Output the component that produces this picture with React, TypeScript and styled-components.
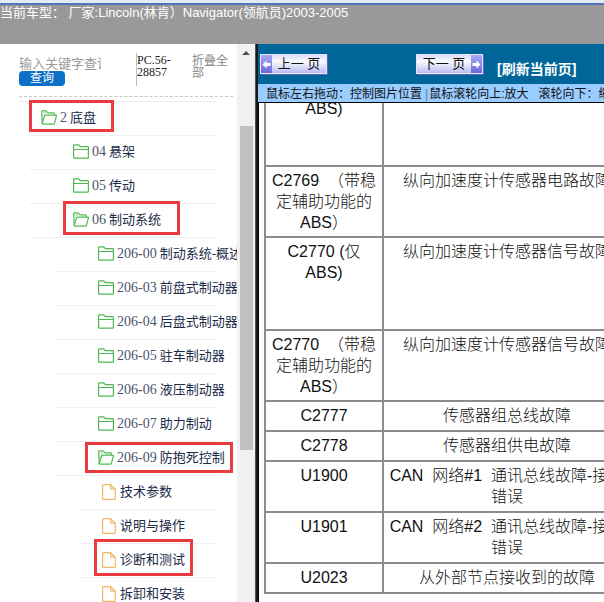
import React from "react";
import styled, { createGlobalStyle, css } from "styled-components";

const GlobalStyle = createGlobalStyle`
  *, *::before, *::after { box-sizing: border-box; }
  body {
    margin: 0;
    background: #fff;
    font-family: "Liberation Sans", "Noto Sans CJK SC", sans-serif;
    font-size: 13px;
  }
  button, input { font: inherit; margin: 0; padding: 0; border: 0; background: none; }
  button { cursor: pointer; }
  a { text-decoration: none; }
`;

const serif = `"Liberation Serif", "Noto Sans CJK SC", serif`;

const Page = styled.div`
  display: grid;
  grid-template-rows: 44px minmax(0, 1fr);
  height: 100vh;
  overflow: hidden;
`;

const Header = styled.header`
  padding: 3px 0 0;
  border-top: 3px solid #e4ebf8;
  background: #999;
  box-shadow: inset 0 2px 0 #5273bd;
  color: #fff;
  line-height: 14px;
  white-space: pre;
  overflow: hidden;
`;

const Body = styled.div`
  display: grid;
  grid-template-columns: 237px 18px 3px minmax(0, 1fr);
  min-height: 0;
`;

const Sidebar = styled.aside`
  overflow: hidden;
  font-family: ${serif};
`;

const SearchBar = styled.form`
  display: grid;
  grid-template-columns: 117px 56px 1fr;
  height: 53px;
  margin: 0 4px 4px 19px;
  border-bottom: 1px dashed #c9c9b8;
  line-height: 12px;
  font-size: 12px;
`;

const SearchFields = styled.div`
  padding-top: 12px;
`;

const SearchInput = styled.input`
  display: block;
  width: 82px;
  height: 15px;
  font-size: 13px;
  line-height: 15px;
  outline: 0;
  &::placeholder { color: #9a9a9a; opacity: 1; }
`;

const SearchButton = styled.button`
  display: block;
  width: 46px;
  height: 15px;
  border-radius: 4px;
  background: #0b70c6;
  color: #fff;
  font-size: 12px;
  line-height: 15px;
`;

const VersionCode = styled.div`
  width: 42px;
  height: 33px;
  margin-top: 9px;
  padding-top: 1px;
  border-left: 1px solid #bbb;
  color: #222;
`;

const CollapseAll = styled.button`
  align-self: start;
  width: 38px;
  margin-top: 11px;
  color: #888;
  line-height: 12px;
  text-align: left;
`;

const Tree = styled.ul`
  list-style: none;
  margin: 0;
  padding: 0;
  &::before {
    content: "";
    display: block;
    height: 1px;
    margin: 0 20px 0 19px;
    background: #ececec;
  }
`;

const TreeRow = styled.li<{ $line: number; $indent: number }>`
  display: flex;
  align-items: center;
  height: 34px;
  margin: 0 20px 0 ${(p) => p.$line}px;
  padding: 0 0 2px ${(p) => p.$indent}px;
  border-bottom: 1px solid #efefef;
`;

const itemStyle = css`
  position: relative;
  display: flex;
  flex: none;
  align-items: center;
  gap: 3px;
  height: 20px;
  color: #1c2b4a;
  font-family: ${serif};
  font-size: 13px;
  line-height: 20px;
  white-space: nowrap;
`;

const FolderItem = styled.button`${itemStyle}`;
const FileItem = styled.a`${itemStyle} gap: 4px;`;

const Code = styled.span`
  font-size: 14px;
  color: #4c546c;
`;

const Mark = styled.span<{ $box: number[] }>`
  position: absolute;
  top: ${(p) => -p.$box[0]}px;
  right: ${(p) => -p.$box[1]}px;
  bottom: ${(p) => -p.$box[2]}px;
  left: ${(p) => -p.$box[3]}px;
  border: 3px solid #e83b3f;
  pointer-events: none;
`;

const ScrollTrack = styled.div`
  display: flex;
  flex-direction: column;
  align-items: center;
  background: #f1f1f1;
`;

const ScrollArrow = styled.span`
  margin: 7px 0 71px;
  border: 4px solid transparent;
  border-top: 0;
  border-bottom-color: #505050;
`;

const ScrollThumb = styled.span`
  width: 13px;
  height: 58%;
  background: #c1c1c1;
`;

const Divider = styled.div`
  border-left: 1px solid #55534e;
  background: #1a1a18;
`;

const Viewer = styled.main`
  display: grid;
  grid-template-rows: 40px 19px minmax(0, 1fr);
  min-width: 0;
  overflow: hidden;
`;

const Toolbar = styled.div`
  display: flex;
  align-items: flex-start;
  padding: 10px 0 0 2px;
  background: #069;
`;

const PageButton = styled.button<{ $next?: boolean }>`
  display: flex;
  flex-direction: ${(p) => (p.$next ? "row-reverse" : "row")};
  align-items: stretch;
  width: 67px;
  height: 20px;
  margin-right: ${(p) => (p.$next ? 14 : 89)}px;
  border: 1px solid #e6e6ff;
  background: linear-gradient(#dcdcfa, #fafaff 35%, #b9bdf2);
  box-shadow: 1px 1px 0 #5a66b8;
  color: #111;
  font-size: 13px;
  line-height: 17px;
`;

const PageButtonText = styled.span`
  flex: 1;
  text-align: center;
`;

const ArrowBox = styled.span`
  display: flex;
  align-items: center;
  justify-content: center;
  width: 11px;
  background: linear-gradient(#a9a9f4, #6969d8);
`;

const Refresh = styled.a`
  margin-top: 6px;
  color: #fff;
  font-weight: bold;
  font-size: 14px;
  line-height: 18px;
  white-space: nowrap;
`;

const Hint = styled.p`
  margin: 0;
  padding-left: 8px;
  border-bottom: 1px solid #000;
  background: #9cf;
  color: #111;
  font-size: 12px;
  line-height: 20px;
  white-space: pre;
  overflow: hidden;
`;

const HintBar = styled.span`
  color: #66809a;
  padding: 0 1px 0 3px;
`;

const Sheet = styled.section`
  overflow: hidden;
  padding-left: 5px;
  border-left: 1px solid #000;
`;

const FaultTable = styled.table`
  width: 100%;
  min-width: 368px;
  margin-top: -10px;
  border-collapse: collapse;
  table-layout: fixed;
  color: #111;
  font-size: 16px;
  font-weight: 300;
  line-height: 21px;
`;

const FaultRow = styled.tr<{ $height: number }>`
  height: ${(p) => p.$height}px;
`;

const Cell = styled.td`
  padding: 3px 0;
  border: 2px solid #8c8c8c;
  text-align: center;
  vertical-align: top;
  white-space: pre;
`;

const CodeCol = styled.col`
  width: 118px;
`;

const FolderIcon = ({ open }: { open?: boolean }) => (
  <svg width="16" height="15" viewBox="0 0 16 15" fill="none" stroke="#4cba50" strokeWidth="1.2" strokeLinejoin="round" aria-hidden="true">
    {open ? (
      <>
        <path d="M1.2 13.8 L0.7 1.6 Q0.7 0.8 1.5 0.8 H5 L7 2.8 H12.5 Q13.3 2.8 13.3 3.8 V5" />
        <path d="M1.1 14.1 L3.4 6 Q3.7 5.1 4.6 5.1 H15 Q15.6 5.1 15.4 5.8 L13.4 13.4 Q13.1 14.2 12.3 14.2 H1.2" />
        <path d="M2.5 3 H5" stroke="#9adb9c" />
      </>
    ) : (
      <path d="M0.6 5.5 H15.4 M0.6 13.4 V1.6 Q0.6 0.8 1.4 0.8 H5.5 L7.5 2.7 H14.6 Q15.4 2.7 15.4 3.5 V13.4 Q15.4 14.2 14.6 14.2 H1.4 Q0.6 14.2 0.6 13.4 Z" />
    )}
  </svg>
);

const FileIcon = () => (
  <svg width="14" height="16" viewBox="0 0 14 16" fill="none" stroke="#f2b765" strokeWidth="1.2" strokeLinejoin="round" aria-hidden="true">
    <path d="M1.4 0.7 H8.6 L13.3 5.2 V14.4 Q13.3 15.3 12.4 15.3 H1.4 Q0.6 15.3 0.6 14.4 V1.6 Q0.6 0.7 1.4 0.7 Z" />
    <path d="M8.6 0.9 V4.2 Q8.6 5.2 9.6 5.2 H13" />
  </svg>
);

const Arrow = ({ right }: { right?: boolean }) => (
  <svg width="9" height="9" viewBox="0 0 9 9" fill="#fff" aria-hidden="true">
    <path d={right ? "M8.5 4.5 L4.5 0.5 V3 H0.5 V6 H4.5 V8.5 Z" : "M0.5 4.5 L4.5 0.5 V3 H8.5 V6 H4.5 V8.5 Z"} />
  </svg>
);

type Node = {
  kind: "open" | "closed" | "file";
  line: number;
  indent: number;
  code?: string;
  name: string;
  mark?: number[];
};

const nodes: Node[] = [
  { kind: "open", line: 29, indent: 12, code: "2", name: "底盘", mark: [8, 18, 4, 12] },
  { kind: "closed", line: 29, indent: 44, code: "04", name: "悬架" },
  { kind: "closed", line: 29, indent: 44, code: "05", name: "传动" },
  { kind: "open", line: 29, indent: 44, code: "06", name: "制动系统", mark: [9, 19, 5, 10] },
  { kind: "closed", line: 54, indent: 44, code: "206-00", name: "制动系统-概述" },
  { kind: "closed", line: 54, indent: 44, code: "206-03", name: "前盘式制动器" },
  { kind: "closed", line: 54, indent: 44, code: "206-04", name: "后盘式制动器" },
  { kind: "closed", line: 54, indent: 44, code: "206-05", name: "驻车制动器" },
  { kind: "closed", line: 54, indent: 44, code: "206-06", name: "液压制动器" },
  { kind: "closed", line: 54, indent: 44, code: "206-07", name: "助力制动" },
  { kind: "open", line: 54, indent: 44, code: "206-09", name: "防抱死控制", mark: [6, 8, 5, 13] },
  { kind: "file", line: 80, indent: 22, name: "技术参数" },
  { kind: "file", line: 80, indent: 22, name: "说明与操作" },
  { kind: "file", line: 80, indent: 22, name: "诊断和测试", mark: [11, 8, 6, 8] },
  { kind: "file", line: 80, indent: 22, name: "拆卸和安装" },
];

const faults: { height: number; code: string; text: string }[] = [
  { height: 72, code: "ABS)", text: "" },
  { height: 71, code: "C2769  （带稳\n定辅助功能的\nABS）", text: "纵向加速度计传感器电路故障" },
  { height: 93, code: "C2770 (仅\nABS)", text: "纵向加速度计传感器信号故障" },
  { height: 71, code: "C2770  （带稳\n定辅助功能的\nABS）", text: "纵向加速度计传感器信号故障" },
  { height: 30, code: "C2777", text: "传感器组总线故障" },
  { height: 30, code: "C2778", text: "传感器组供电故障" },
  { height: 51, code: "U1900", text: "CAN  网络#1  通讯总线故障-接收\n错误" },
  { height: 51, code: "U1901", text: "CAN  网络#2  通讯总线故障-接收\n错误" },
  { height: 30, code: "U2023", text: "从外部节点接收到的故障" },
];

export default function App() {
  return (
    <>
      <GlobalStyle />
      <Page>
        <Header>当前车型： 厂家:Lincoln(林肯）Navigator(领航员)2003-2005</Header>
        <Body>
          <Sidebar>
            <SearchBar onSubmit={(e) => e.preventDefault()}>
              <SearchFields>
                <SearchInput type="text" aria-label="输入关键字查询" placeholder="输入关键字查询" />
                <SearchButton type="submit">查询</SearchButton>
              </SearchFields>
              <VersionCode>PC.56-28857</VersionCode>
              <CollapseAll type="button">折叠全部</CollapseAll>
            </SearchBar>
            <Tree>
              {nodes.map((n) => (
                <TreeRow key={n.name + n.code} $line={n.line} $indent={n.indent}>
                  {n.kind === "file" ? (
                    <FileItem href="#">
                      <FileIcon />
                      {n.name}
                      {n.mark && <Mark $box={n.mark} />}
                    </FileItem>
                  ) : (
                    <FolderItem type="button" aria-expanded={n.kind === "open"}>
                      <FolderIcon open={n.kind === "open"} />
                      <Code>{n.code}</Code>
                      <span>{n.name}</span>
                      {n.mark && <Mark $box={n.mark} />}
                    </FolderItem>
                  )}
                </TreeRow>
              ))}
            </Tree>
          </Sidebar>
          <ScrollTrack aria-hidden="true">
            <ScrollArrow />
            <ScrollThumb />
          </ScrollTrack>
          <Divider />
          <Viewer>
            <Toolbar>
              <PageButton type="button">
                <ArrowBox><Arrow /></ArrowBox>
                <PageButtonText>上一 页</PageButtonText>
              </PageButton>
              <PageButton type="button" $next>
                <ArrowBox><Arrow right /></ArrowBox>
                <PageButtonText>下一 页</PageButtonText>
              </PageButton>
              <Refresh href="#">[刷新当前页]</Refresh>
            </Toolbar>
            <Hint>
              鼠标左右拖动：控制图片位置<HintBar>|</HintBar>{"鼠标滚轮向上:放大   滚轮向下：缩小"}
            </Hint>
            <Sheet>
              <FaultTable>
                <colgroup>
                  <CodeCol />
                  <col />
                </colgroup>
                <tbody>
                  {faults.map((f, i) => (
                    <FaultRow key={i} $height={f.height}>
                      <Cell>{f.code}</Cell>
                      <Cell>{f.text}</Cell>
                    </FaultRow>
                  ))}
                </tbody>
              </FaultTable>
            </Sheet>
          </Viewer>
        </Body>
      </Page>
    </>
  );
}
